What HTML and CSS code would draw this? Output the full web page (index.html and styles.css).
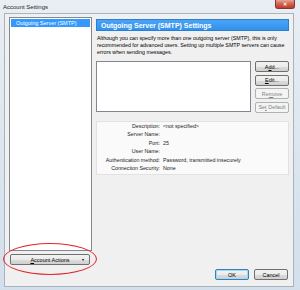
FILE: index.html
```html
<!DOCTYPE html>
<html lang="en">
<head>
  <meta charset="UTF-8" />
  <title>Account Settings</title>
  <link rel="stylesheet" href="styles.css">
</head>
<body>
  <div class="window">
    <div class="titlebar">
      <span class="title">Account Settings</span>
      <span class="close">&#x2715;</span>
    </div>

    <div class="client">
      <div class="body">
        <div class="sidebar">
          <ul class="account-tree">
            <li class="selected">Outgoing Server (SMTP)</li>
          </ul>
          <button class="btn actions"><span><u>A</u>ccount Actions</span><span class="caret">&#9662;</span></button>
        </div>

        <div class="main">
          <h2 class="pane-title">Outgoing Server (SMTP) Settings</h2>
          <p class="intro">Although you can specify more than one outgoing server (SMTP), this is only recommended for advanced users. Setting up multiple SMTP servers can cause errors when sending messages.</p>

          <div class="server-row">
            <div class="server-list"></div>
            <div class="server-buttons">
              <button class="btn">A<u>d</u>d...</button>
              <button class="btn"><u>E</u>dit...</button>
              <button class="btn" disabled>Re<u>m</u>ove</button>
              <button class="btn" disabled>Se<u>t</u> Default</button>
            </div>
          </div>

          <div class="details">
            <div class="row"><span class="label">Description:</span><span class="value">&lt;not specified&gt;</span></div>
            <div class="row"><span class="label">Server Name:</span><span class="value"></span></div>
            <div class="row"><span class="label">Port:</span><span class="value">25</span></div>
            <div class="row"><span class="label">User Name:</span><span class="value"></span></div>
            <div class="row"><span class="label">Authentication method:</span><span class="value">Password, transmitted insecurely</span></div>
            <div class="row"><span class="label">Connection Security:</span><span class="value">None</span></div>
          </div>
        </div>
      </div>

      <div class="footer">
        <button class="btn default">OK</button>
        <button class="btn">Cancel</button>
      </div>
    </div>

    <div class="annotation"></div>
  </div>
</body>
</html>
```

FILE: styles.css
```css
body {
  margin: 0;
  padding: 0;
  font-family: 'Liberation Sans', Arial, sans-serif;
  background: #ffffff;
}

.window {
  position: relative;
  width: 300px;
  height: 290px;
  box-sizing: border-box;
  padding: 0 6px 3px 4px;
  display: flex;
  flex-direction: column;
  background: linear-gradient(to bottom, #e9eef3 0, #dfe7ef 40%, #d3dfeb 100%);
}

.titlebar {
  height: 13px;
  display: flex;
  justify-content: space-between;
  align-items: flex-start;
}

.title {
  font-size: 6px;
  line-height: 14px;
  color: #1e1e1e;
  margin-left: -1px;
}

.close {
  width: 20px;
  height: 9px;
  margin-right: -1px;
  border: 1px solid #7a3a3a;
  border-top: none;
  border-radius: 0 0 3px 3px;
  box-sizing: border-box;
  background: linear-gradient(to bottom, #e8a393 0, #d0614d 50%, #c23b26 100%);
  color: #ffffff;
  font-size: 5px;
  font-weight: bold;
  line-height: 8px;
  text-align: center;
}

.client {
  flex-grow: 1;
  display: flex;
  flex-direction: column;
  background: #f0f0f0;
  border: 1px solid #a7b3bf;
  box-sizing: border-box;
}

.body {
  flex-grow: 1;
  display: flex;
  gap: 4px;
  padding: 3px 4px 0 4px;
}

.sidebar {
  width: 83px;
  flex-shrink: 0;
  display: flex;
  flex-direction: column;
  gap: 3px;
}

.account-tree {
  flex-grow: 1;
  margin: 0;
  padding: 1px;
  list-style: none;
  background: #ffffff;
  border: 1px solid #828790;
}

.account-tree li {
  font-size: 5.5px;
  line-height: 8px;
  padding-left: 5px;
  color: #000000;
  white-space: nowrap;
}

.account-tree li.selected {
  background: #3399ff;
  color: #ffffff;
}

.btn {
  font-family: 'Liberation Sans', Arial, sans-serif;
  font-size: 5.5px;
  height: 11px;
  padding: 0;
  color: #000000;
  white-space: nowrap;
  border: 1px solid #707070;
  border-radius: 2px;
  background: linear-gradient(to bottom, #f2f2f2 0, #ebebeb 50%, #dddddd 51%, #cfcfcf 100%);
}

.btn:disabled {
  color: #838383;
  border-color: #adb2b5;
  background: #f4f4f4;
}

.btn.actions {
  margin: 0 2px 1px 1px;
  display: flex;
  align-items: center;
  justify-content: center;
  position: relative;
}

.caret {
  position: absolute;
  right: 5px;
  font-size: 4px;
}

.main {
  flex-grow: 1;
  min-width: 0;
  padding-top: 2px;
  display: flex;
  flex-direction: column;
}

.pane-title {
  margin: 0;
  height: 12px;
  box-sizing: border-box;
  padding-left: 4px;
  font-size: 7px;
  line-height: 11px;
  font-weight: bold;
  color: #ffffff;
  background: linear-gradient(to bottom, #4aa3f5 0, #3392ee 100%);
  border: 1px solid #2a7fd4;
}

.intro {
  margin: 4px 0 5px 1px;
  font-size: 5.3px;
  line-height: 7px;
  color: #000000;
}

.server-row {
  display: flex;
  gap: 4px;
}

.server-list {
  flex-grow: 1;
  height: 51px;
  background: #ffffff;
  border: 1px solid #828790;
  box-sizing: border-box;
}

.server-buttons {
  width: 34px;
  display: flex;
  flex-direction: column;
  gap: 2.5px;
}

.details {
  margin-top: 8px;
  padding: 0 0 1px 0;
  background: #fafafa;
  border: 1px solid #e2e2e2;
}

.details .row {
  display: flex;
  font-size: 5.3px;
  line-height: 8.6px;
  color: #1a1a1a;
}

.details .label {
  width: 63px;
  flex-shrink: 0;
  text-align: right;
  margin-right: 3px;
}

.footer {
  display: flex;
  justify-content: flex-end;
  gap: 5px;
  padding: 3px 5px 6px 0;
}

.footer .btn {
  width: 34px;
}

.btn.default {
  border-color: #3c7fb1;
  box-shadow: inset 0 0 0 1px #9fdcf8;
}

.annotation {
  position: absolute;
  left: 3px;
  top: 243px;
  width: 94px;
  height: 32px;
  box-sizing: border-box;
  border: 1px solid #e3262a;
  border-radius: 50%;
}
```
